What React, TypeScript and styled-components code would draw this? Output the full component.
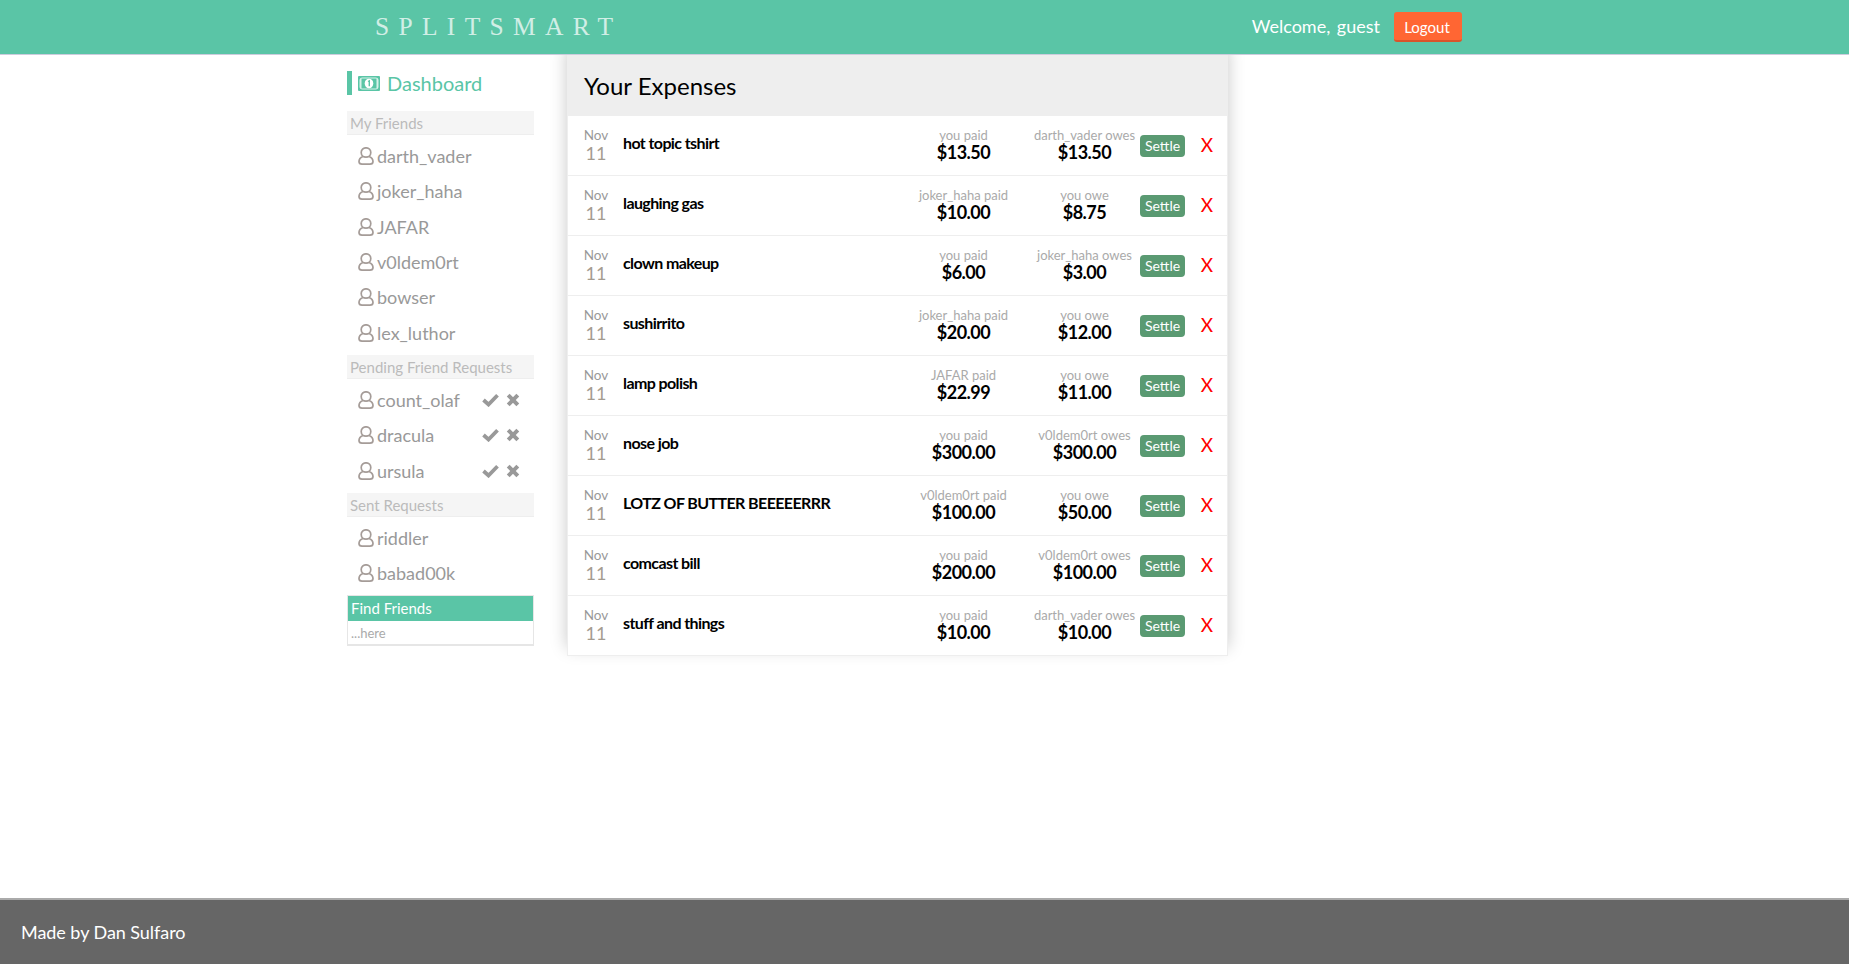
import { createGlobalStyle } from "styled-components";
import styled from "styled-components";

const GlobalStyle = createGlobalStyle`
  html, body { margin: 0; padding: 0; background: #fff; }
  body { font-family: Lato, "Open Sans", sans-serif; color: #000; }
  * { box-sizing: border-box; }
`;

const friends = ["darth_vader", "joker_haha", "JAFAR", "v0ldem0rt", "bowser", "lex_luthor"];
const pending = ["count_olaf", "dracula", "ursula"];
const sent = ["riddler", "babad00k"];

const expenses = [
  { name: "hot topic tshirt", payer: "you paid", paid: "$13.50", owesLabel: "darth_vader owes", owes: "$13.50" },
  { name: "laughing gas", payer: "joker_haha paid", paid: "$10.00", owesLabel: "you owe", owes: "$8.75" },
  { name: "clown makeup", payer: "you paid", paid: "$6.00", owesLabel: "joker_haha owes", owes: "$3.00" },
  { name: "sushirrito", payer: "joker_haha paid", paid: "$20.00", owesLabel: "you owe", owes: "$12.00" },
  { name: "lamp polish", payer: "JAFAR paid", paid: "$22.99", owesLabel: "you owe", owes: "$11.00" },
  { name: "nose job", payer: "you paid", paid: "$300.00", owesLabel: "v0ldem0rt owes", owes: "$300.00" },
  { name: "LOTZ OF BUTTER BEEEEERRR", payer: "v0ldem0rt paid", paid: "$100.00", owesLabel: "you owe", owes: "$50.00" },
  { name: "comcast bill", payer: "you paid", paid: "$200.00", owesLabel: "v0ldem0rt owes", owes: "$100.00" },
  { name: "stuff and things", payer: "you paid", paid: "$10.00", owesLabel: "darth_vader owes", owes: "$10.00" },
];

const Page = styled.div`
  min-height: 964px;
  display: flex;
  flex-direction: column;
`;

const Navbar = styled.header`
  position: relative;
  z-index: 1;
  height: 55px;
  flex: none;
  background: #5ac5a6;
  border-bottom: 1px solid #ccd;
  padding-left: 375px;
  padding-right: 387px;
  display: flex;
  align-items: center;
  justify-content: space-between;
  color: #fff;
`;

const Logo = styled.div`
  font-family: "Liberation Serif", serif;
  font-size: 25.5px;
  letter-spacing: 9.3px;
  opacity: 0.72;
  margin-top: -1px;
`;

const NavRight = styled.div`
  display: flex;
  align-items: center;
`;

const Welcome = styled.span`
  font-size: 18px;
  word-spacing: 2px;
  margin-right: 14px;
  margin-top: -3px;
`;

const LogoutButton = styled.button`
  width: 68px;
  height: 30px;
  background: #ff6633;
  border: 0;
  border-bottom: 2px solid #d9542b;
  border-radius: 3px;
  color: #fff;
  font-family: inherit;
  font-size: 15px;
  padding: 2px 2px 0 0;
`;

const Content = styled.main`
  display: flex;
  align-items: flex-start;
  padding-left: 347px;
  flex: 1;
`;

const Sidebar = styled.aside`
  width: 187px;
  padding-top: 16px;
  flex: none;
`;

const DashboardLink = styled.div`
  height: 24px;
  display: flex;
  align-items: center;
  border-left: 5px solid #5ac5a6;
  padding-left: 6px;
  color: #5ac5a6;
  font-size: 20px;
  gap: 7px;
  margin-bottom: 16px;
`;

const SectionTitle = styled.div`
  height: 24px;
  line-height: 25px;
  background: #f5f5f5;
  border-bottom: 1px solid #eee;
  color: #bbb;
  font-size: 15px;
  padding-left: 3px;
`;

const FriendList = styled.ul`
  list-style: none;
  margin: 0;
  padding: 4px 0;
`;

const FriendRow = styled.li`
  height: 35.3px;
  display: flex;
  align-items: center;
  padding: 0 0 1px 11px;
  color: #999;
  font-size: 18px;
  gap: 3px;
`;

const Actions = styled.span`
  margin-left: auto;
  margin-right: 14px;
  display: flex;
  gap: 7px;
  align-items: center;
`;

const FindBox = styled.div`
  border: 1px solid #e6e6e6;
  border-bottom-width: 2px;
`;

const FindTitle = styled.div`
  height: 25px;
  line-height: 25px;
  background: #5ac5a6;
  color: #fff;
  font-size: 15px;
  padding-left: 3px;
`;

const FindInput = styled.input`
  display: block;
  width: 100%;
  height: 23px;
  border: 0;
  outline: 0;
  padding: 0 3px;
  font-family: inherit;
  font-size: 13px;
  &::placeholder { color: #aaa; opacity: 1; }
`;

const Panel = styled.section`
  width: 661px;
  margin-left: 33px;
  box-shadow: 0 -8px 16px rgba(0, 0, 0, 0.22);
  border-left: 1px solid #eee;
  border-right: 1px solid #eee;
  background: #fff;
`;

const PanelHeader = styled.h1`
  margin: 0;
  height: 61px;
  background: #eee;
  font-size: 24px;
  font-weight: 400;
  line-height: 61px;
  padding-left: 16px;
`;

const Row = styled.div`
  height: 60px;
  display: flex;
  align-items: center;
  border-bottom: 1px solid #eee;
`;

const DateCell = styled.div`
  width: 55px;
  padding-left: 1px;
  flex: none;
  text-align: center;
  color: #999;
  font-size: 13.5px;
  line-height: 14px;
`;

const DateDay = styled.div`
  font-size: 18px;
  line-height: 22px;
  color: #a59c90;
`;

const ExpenseName = styled.div`
  flex: 1;
  font-size: 16px;
  font-weight: 700;
  letter-spacing: -0.6px;
  margin-top: -7px;
`;

const Amount = styled.div<{ $width: number }>`
  width: ${(p) => p.$width}px;
  flex: none;
  margin-top: -1px;
  text-align: center;
  font-size: 13px;
  line-height: 14px;
  color: #aaa;
  white-space: nowrap;
`;

const AmountValue = styled.div`
  padding-top: 1px;
  color: #000;
  font-size: 18px;
  font-weight: 700;
  line-height: 19px;
  letter-spacing: -0.5px;
`;

const SettleButton = styled.button`
  width: 45px;
  height: 22px;
  margin-left: 2px;
  padding: 0;
  border: 0;
  border-radius: 4px;
  background: #5a9a72;
  color: #fff;
  font-family: inherit;
  font-size: 14px;
`;

const RemoveMark = styled.div`
  width: 42px;
  padding-left: 2px;
  flex: none;
  text-align: center;
  color: #f00;
  font-size: 19px;
  margin-top: -2px;
`;

const Footer = styled.footer`
  height: 66px;
  flex: none;
  background: #666;
  border-top: 2px solid #aaa;
  color: #fff;
  font-size: 18px;
  letter-spacing: -0.05px;
  padding-left: 21px;
  display: flex;
  align-items: center;
`;

function UserIcon() {
  return (
    <svg width="16" height="18" viewBox="0 0 16 18" fill="none" stroke="#a59c98" strokeWidth="1.7">
      <ellipse cx="8" cy="5.500" rx="4.800" ry="4.700" />
      <path d="M5 9.500 C2.500 10.500 1 12 1 14.500 C1 16.500 2 17.150 4 17.150 H12 C14 17.150 15 16.500 15 14.500 C15 12 13.500 10.500 11 9.500" />
    </svg>
  );
}

function MoneyIcon() {
  return (
    <svg width="22" height="15" viewBox="0 0 22 15">
      <rect x="0" y="0" width="22" height="15" rx="1" fill="#5ac5a6" />
      <rect x="1.500" y="1.500" width="19" height="12" rx="3" fill="#d8f2ea" />
      <rect x="3.500" y="2.500" width="15" height="10" fill="#5ac5a6" />
      <ellipse cx="11" cy="7.500" rx="4.300" ry="4.800" fill="#fff" />
      <path d="M10 5.500 L11.300 4.800 V10.200" fill="none" stroke="#5ac5a6" strokeWidth="1.400" />
    </svg>
  );
}

function CheckIcon() {
  return (
    <svg width="17" height="14" viewBox="0 0 17 14" fill="none" stroke="#999" strokeWidth="3.800">
      <path d="M1.500 7 L6.500 11.500 L15.500 2.200" />
    </svg>
  );
}

function CrossIcon() {
  return (
    <svg width="14" height="14" viewBox="0 0 14 14" fill="none" stroke="#999" strokeWidth="4">
      <path d="M2.200 2.200 L11.800 11.800 M11.800 2.200 L2.200 11.800" />
    </svg>
  );
}

export default function App() {
  return (
    <Page>
      <GlobalStyle />
      <Navbar>
        <Logo>SPLITSMART</Logo>
        <NavRight>
          <Welcome>Welcome, guest</Welcome>
          <LogoutButton>Logout</LogoutButton>
        </NavRight>
      </Navbar>
      <Content>
        <Sidebar>
          <DashboardLink>
            <MoneyIcon />
            Dashboard
          </DashboardLink>
          <SectionTitle>My Friends</SectionTitle>
          <FriendList>
            {friends.map((f) => (
              <FriendRow key={f}>
                <UserIcon />
                {f}
              </FriendRow>
            ))}
          </FriendList>
          <SectionTitle>Pending Friend Requests</SectionTitle>
          <FriendList>
            {pending.map((f) => (
              <FriendRow key={f}>
                <UserIcon />
                {f}
                <Actions>
                  <CheckIcon />
                  <CrossIcon />
                </Actions>
              </FriendRow>
            ))}
          </FriendList>
          <SectionTitle>Sent Requests</SectionTitle>
          <FriendList>
            {sent.map((f) => (
              <FriendRow key={f}>
                <UserIcon />
                {f}
              </FriendRow>
            ))}
          </FriendList>
          <FindBox>
            <FindTitle>Find Friends</FindTitle>
            <FindInput placeholder="...here" />
          </FindBox>
        </Sidebar>
        <Panel>
          <PanelHeader>Your Expenses</PanelHeader>
          {expenses.map((e) => (
            <Row key={e.name}>
              <DateCell>
                Nov
                <DateDay>11</DateDay>
              </DateCell>
              <ExpenseName>{e.name}</ExpenseName>
              <Amount $width={135}>
                {e.payer}
                <AmountValue>{e.paid}</AmountValue>
              </Amount>
              <Amount $width={107}>
                {e.owesLabel}
                <AmountValue>{e.owes}</AmountValue>
              </Amount>
              <SettleButton>Settle</SettleButton>
              <RemoveMark>X</RemoveMark>
            </Row>
          ))}
        </Panel>
      </Content>
      <Footer>Made by Dan Sulfaro</Footer>
    </Page>
  );
}
